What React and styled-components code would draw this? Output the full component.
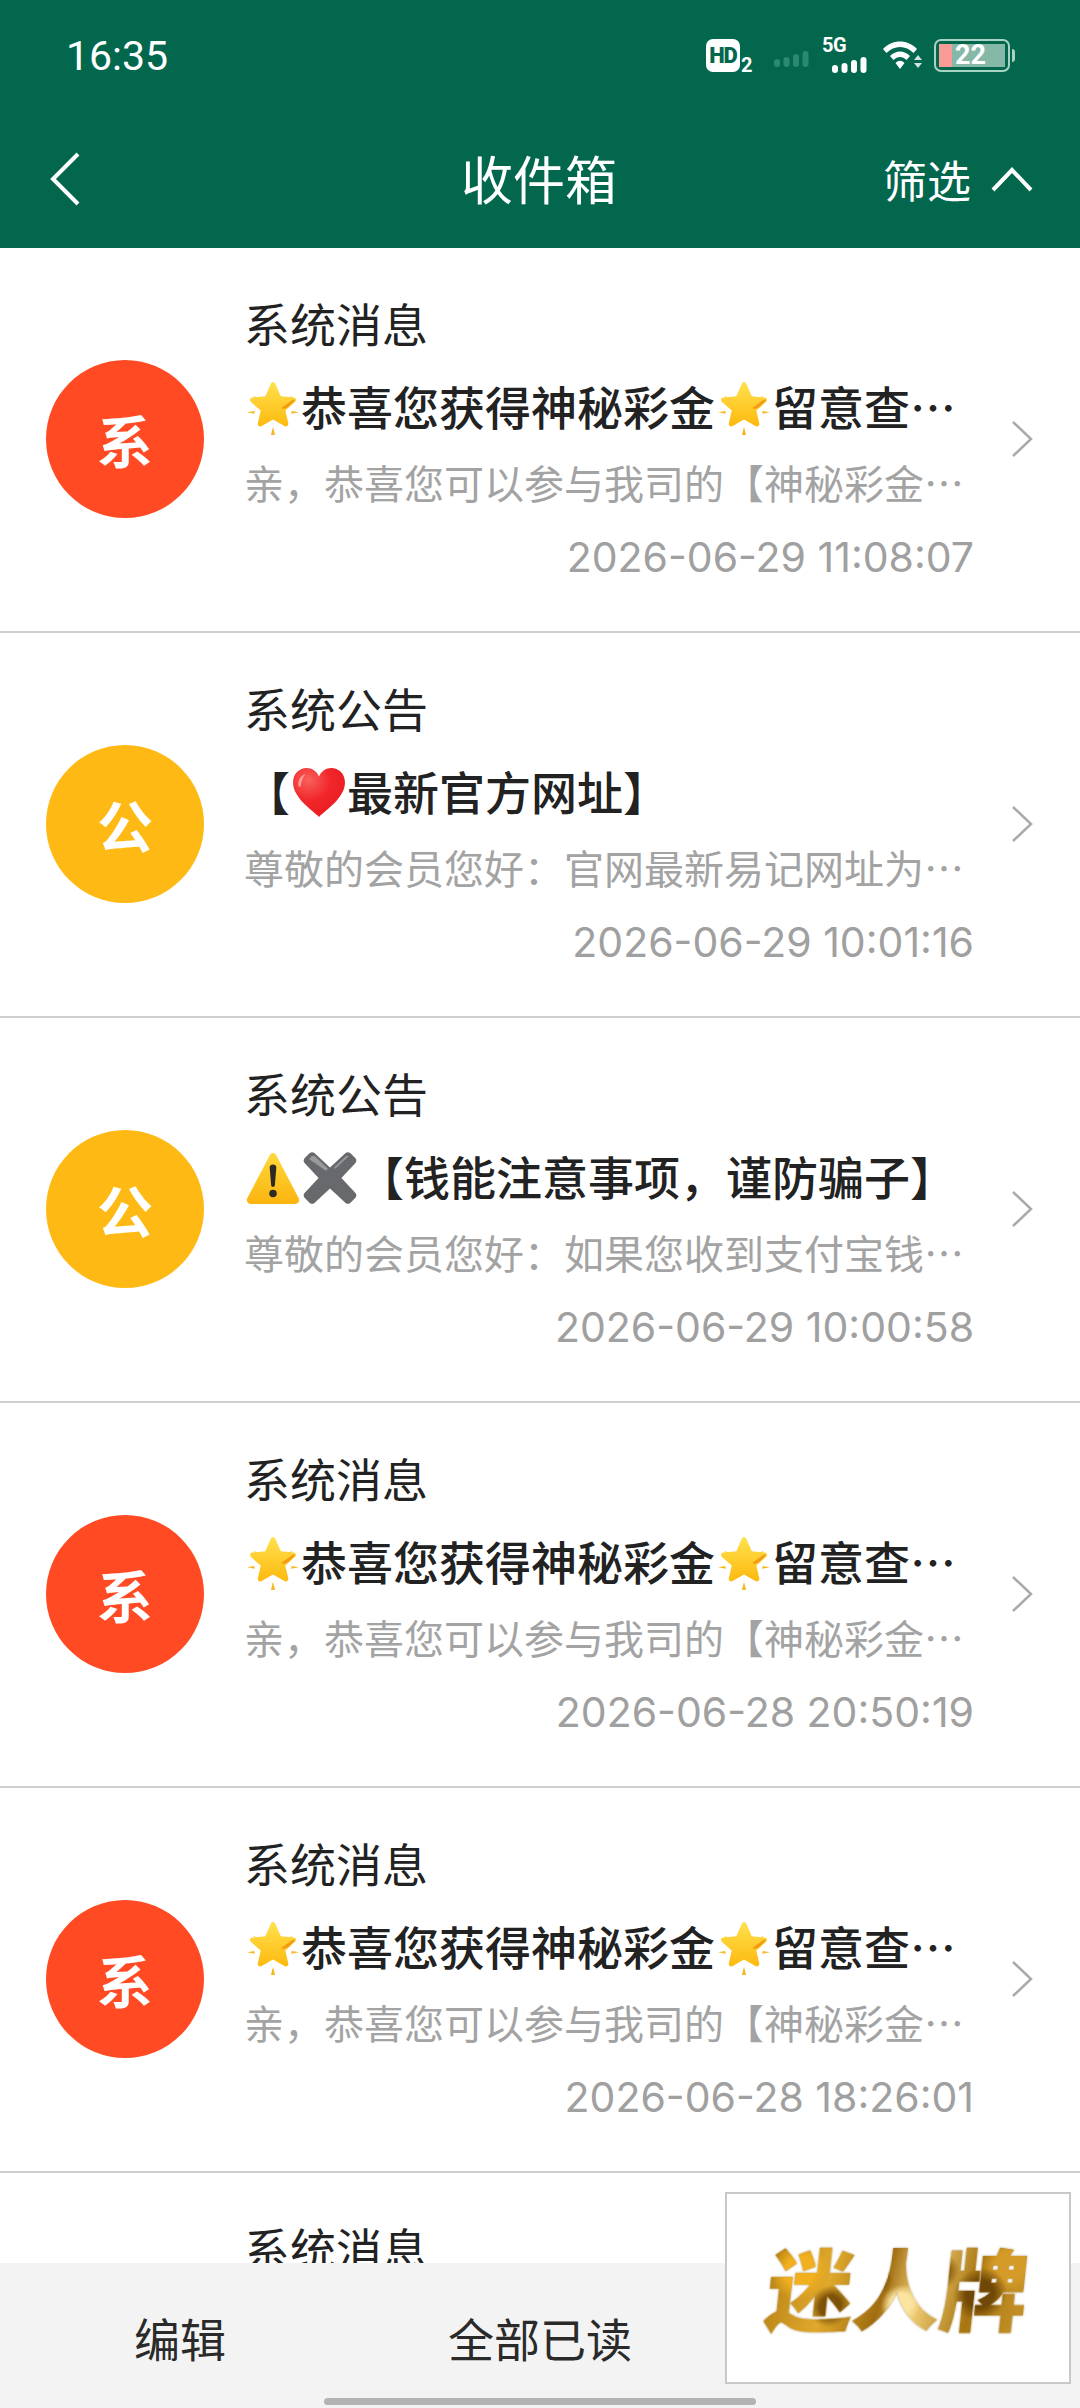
import styled, { createGlobalStyle } from 'styled-components';

const messages = [
  { id: 1, kind: 'sys', title: '系统消息', subject: 'star', preview: '亲，恭喜您可以参与我司的【神秘彩金】活动，请留意查收', time: '2026-06-29 11:08:07' },
  { id: 2, kind: 'pub', title: '系统公告', subject: 'site', preview: '尊敬的会员您好：官网最新易记网址为以下地址，请收藏', time: '2026-06-29 10:01:16' },
  { id: 3, kind: 'pub', title: '系统公告', subject: 'warn', preview: '尊敬的会员您好：如果您收到支付宝钱能相关的通知信息', time: '2026-06-29 10:00:58' },
  { id: 4, kind: 'sys', title: '系统消息', subject: 'star', preview: '亲，恭喜您可以参与我司的【神秘彩金】活动，请留意查收', time: '2026-06-28 20:50:19' },
  { id: 5, kind: 'sys', title: '系统消息', subject: 'star', preview: '亲，恭喜您可以参与我司的【神秘彩金】活动，请留意查收', time: '2026-06-28 18:26:01' },
  { id: 6, kind: 'sys', title: '系统消息', subject: 'star', preview: '亲，恭喜您可以参与我司的【神秘彩金】活动，请留意查收', time: '2026-06-28 16:12:44' },
];

const GlobalStyle = createGlobalStyle`
  html, body {
    margin: 0;
    padding: 0;
    background: #fff;
  }
  body {
    font-family: "Noto Sans CJK SC", "Noto Sans", sans-serif;
  }
`;

const Page = styled.div`
  position: relative;
  width: 1080px;
  height: 2408px;
  display: flex;
  flex-direction: column;
  overflow: hidden;
  background: #fff;
`;

const Header = styled.header`
  flex: none;
  height: 248px;
  background: #02674d;
  color: #fff;
  display: flex;
  flex-direction: column;
`;

const StatusBar = styled.div`
  height: 110px;
  box-sizing: border-box;
  padding: 2px 66px 0 66px;
  display: flex;
  align-items: center;
  justify-content: space-between;
`;

const Clock = styled.span`
  font-family: Roboto, sans-serif;
  font-size: 41px;
`;

const StatusIcons = styled.div`
  display: flex;
  align-items: center;
  height: 36px;
  margin-top: -2px;
`;

const HdBox = styled.div`
  width: 34px;
  height: 33px;
  border-radius: 7px;
  background: #fff;
  color: #02674d;
  font: 900 22px/33px Roboto, sans-serif;
  text-align: center;
  letter-spacing: -1px;
`;

const HdSub = styled.span`
  align-self: flex-end;
  width: 12px;
  font: 700 20px/18px Roboto, sans-serif;
  margin-left: 1px;
  margin-bottom: -1px;
`;

const BarsSlot = styled.div`
  flex: none;
  width: 35px;
  margin: 8px 0 0 21px;
`;

const NetBlock = styled.div`
  position: relative;
  width: 45px;
  height: 36px;
  margin-left: 13px;
  display: flex;
  align-items: flex-end;
  justify-content: flex-end;
`;

const NetLabel = styled.span`
  position: absolute;
  left: 0;
  top: -2px;
  font: 700 20px/20px Roboto, sans-serif;
  letter-spacing: -0.5px;
`;

const Wifi = styled.svg`
  display: block;
  width: 40px;
  height: 30px;
  margin-left: 15px;
`;

const Battery = styled.div`
  position: relative;
  width: 76px;
  height: 33px;
  margin-left: 12px;
  margin-right: 4px;
  box-sizing: border-box;
  border: 2px solid #a7d2c4;
  border-radius: 7px;
  padding: 3px;
  &::after {
    content: '';
    position: absolute;
    right: -7px;
    top: 8px;
    width: 3px;
    height: 13px;
    border-radius: 0 3px 3px 0;
    background: #a7d2c4;
  }
`;

const BatteryFill = styled.div`
  height: 100%;
  display: flex;
  background: #86b8a8;
  color: #fff;
  font: 700 27px/23px Roboto, sans-serif;
`;

const BatteryLevel = styled.div`
  width: 13px;
  height: 100%;
  background: #fb9b97;
  margin-right: 3px;
`;

const NavBar = styled.nav`
  position: relative;
  flex: 1;
  display: flex;
  align-items: center;
  justify-content: center;
  padding-bottom: 2px;
`;

const NavTitle = styled.h1`
  margin: 0 2px 0 0;
  font-size: 52px;
  font-weight: 400;
  line-height: 1;
`;

const BackIcon = styled.svg`
  position: absolute;
  left: 48px;
  top: 41px;
  width: 34px;
  height: 56px;
`;

const FilterButton = styled.div`
  position: absolute;
  right: 47px;
  top: 0;
  height: 100%;
  display: flex;
  align-items: center;
  gap: 20px;
  font-size: 44px;
`;

const CaretIcon = styled.svg`
  display: block;
  width: 42px;
  height: 26px;
`;

const List = styled.main`
  flex: 1;
  min-height: 0;
  overflow: hidden;
`;

const Row = styled.article`
  box-sizing: border-box;
  height: 385px;
  padding-left: 46px;
  display: flex;
  align-items: center;
  border-bottom: 2px solid #cfcfcf;
`;

const Avatar = styled.div`
  flex: none;
  width: 158px;
  height: 158px;
  margin-top: -2px;
  border-radius: 50%;
  background: ${props => (props.kind === 'pub' ? '#ffb914' : '#ff4a24')};
  color: #fff;
  display: flex;
  align-items: center;
  justify-content: center;
  font-size: 56px;
  font-weight: 700;
`;

const Content = styled.div`
  align-self: flex-start;
  box-sizing: border-box;
  width: 730px;
  margin-left: 40px;
  padding-top: 33px;
`;

const Title = styled.div`
  height: 84px;
  line-height: 82px;
  font-size: 46px;
  color: #222;
`;

const Subject = styled.div`
  height: 84px;
  line-height: 80px;
  width: 714px;
  font-size: 46px;
  font-weight: 500;
  color: #222;
  white-space: nowrap;
  overflow: hidden;
  text-overflow: ellipsis;
`;

const Emoji = styled.svg`
  display: inline-block;
  width: 54px;
  height: 54px;
  margin: 0 1.5px;
  vertical-align: -10px;
`;

const Preview = styled.div`
  height: 70px;
  line-height: 66px;
  width: 724px;
  font-size: 40px;
  color: #a3a3a3;
  white-space: nowrap;
  overflow: hidden;
  text-overflow: ellipsis;
`;

const Time = styled.div`
  height: 74px;
  line-height: 76px;
  text-align: right;
  font-family: Inter, Roboto, sans-serif;
  font-size: 41px;
  color: #a0a0a0;
`;

const Chevron = styled.svg`
  flex: none;
  width: 24px;
  height: 38px;
  margin-left: 36px;
  margin-top: -2px;
`;

const BottomBar = styled.footer`
  flex: none;
  height: 145px;
  box-sizing: border-box;
  padding-top: 2px;
  background: #f3f3f3;
  display: grid;
  grid-template-columns: repeat(3, 360px);
  align-items: center;
  justify-items: center;
  font-size: 46px;
  color: #2a2a2a;
`;

const HomeIndicator = styled.div`
  position: absolute;
  left: 324px;
  bottom: 3px;
  width: 432px;
  height: 7px;
  border-radius: 4px;
  background: #b3b3b3;
`;

const LogoCard = styled.div`
  position: absolute;
  left: 725px;
  top: 2192px;
  width: 346px;
  height: 192px;
  box-sizing: border-box;
  border: 2px solid #c8c8c8;
  background: #fff;
  display: flex;
  align-items: center;
  justify-content: center;
`;

const LogoText = styled.span`
  display: block;
  margin-top: -4px;
  font-size: 88px;
  font-weight: 900;
  line-height: 100px;
  letter-spacing: -1px;
  transform: skewX(-6deg);
  color: transparent;
  background:
    radial-gradient(circle at 12% 35%, #f2b01e 0 6%, transparent 12%),
    radial-gradient(circle at 25% 70%, #7d5208 0 5%, transparent 10%),
    radial-gradient(circle at 42% 45%, #8a5c0c 0 5%, transparent 10%),
    radial-gradient(circle at 52% 68%, #fbe3a0 0 7%, transparent 13%),
    radial-gradient(circle at 66% 36%, #8f6210 0 5%, transparent 10%),
    radial-gradient(circle at 82% 58%, #6f4706 0 6%, transparent 12%),
    radial-gradient(circle at 92% 30%, #d49b28 0 6%, transparent 12%),
    linear-gradient(100deg, #b57f14, #e0a92c 25%, #a06d10 45%, #f0cd74 58%, #a87510 78%, #c8942a);
  -webkit-background-clip: text;
  background-clip: text;
  filter: drop-shadow(0 0 1px rgba(120, 90, 30, 0.55));
`;

const barHeights = [8, 10, 13, 16];

const SignalBars = ({ color }) => (
  <svg viewBox="0 0 35 16" width="35" height="16" fill={color} style={{ display: 'block' }}>
    {barHeights.map((h, i) => (
      <rect key={h} x={i * 9.5} y={16 - h} width="6" height={h} rx="3" />
    ))}
  </svg>
);

const StarEmoji = () => (
  <Emoji viewBox="0 0 52 52">
    <defs>
      <linearGradient id="starFill" x1="0" y1="0" x2="0" y2="1">
        <stop offset="0" stopColor="#ffe14d" />
        <stop offset="1" stopColor="#fdb90f" />
      </linearGradient>
    </defs>
    <g fill="#f5b820">
      <path d="M26 44l2 8h-4zM7 14l7 4-1.500 2.200zM45 14l-7 4 1.500 2.200zM1 30l7-1 .5 2.500zM51 30l-7-1-.5 2.500z" />
    </g>
    <path
      d="M26 1c1.200 0 2 1 2.500 2.200l5 11.500 12.500 1.200c2.200.2 3 2.700 1.300 4.200l-9.400 8.300 2.800 12.300c.5 2.200-1.800 3.800-3.700 2.600L26 37l-10.900 6.400c-2 1.200-4.200-.5-3.700-2.600l2.800-12.300-9.400-8.300c-1.700-1.500-.9-4 1.300-4.200l12.500-1.200 5-11.500C24 2 24.800 1 26 1z"
      fill="url(#starFill)"
    />
    <path d="M34 26l11-8c1.500-.8 2.500 1 1 2l-6 5.500c-2 1.200-4.500 1.500-6 .5z" fill="#f39a12" />
  </Emoji>
);

const HeartEmoji = () => (
  <Emoji viewBox="0 0 52 50">
    <defs>
      <radialGradient id="heartFill" cx="0.3" cy="0.25" r="0.85">
        <stop offset="0" stopColor="#f9605c" />
        <stop offset="0.5" stopColor="#f0262a" />
        <stop offset="1" stopColor="#e81b20" />
      </radialGradient>
    </defs>
    <path
      d="M26 48C20 42 1 30 1 15 1 6 7.500 1 14 1c5.500 0 9.500 3 12 8 2.500-5 6.500-8 12-8 6.500 0 13 5 13 14 0 15-19 27-25 33z"
      fill="url(#heartFill)"
    />
    <path d="M6 17c0-5 3-9 7-10-2.500 3-4 6-4.500 11-.2 2-2.500 1-2.500-1z" fill="#ff9c96" />
  </Emoji>
);

const WarnEmoji = () => (
  <Emoji viewBox="0 0 52 52">
    <defs>
      <linearGradient id="warnFill" x1="0" y1="0" x2="0" y2="1">
        <stop offset="0" stopColor="#ffd83b" />
        <stop offset="1" stopColor="#fbb40f" />
      </linearGradient>
    </defs>
    <path d="M26 2c1.500 0 2.500 1 3.300 2.500l21.500 41c1.200 2.500-.3 5.500-3.300 5.500H4.500c-3 0-4.500-3-3.300-5.500l21.500-41C23.500 3 24.500 2 26 2z" fill="url(#warnFill)" />
    <path d="M22.800 16c0-1.800 1.400-3 3.200-3s3.200 1.200 3.200 3l-1.400 17c-.1 1-.8 1.600-1.800 1.600s-1.700-.6-1.800-1.600z" fill="#2d2a24" />
    <circle cx="26" cy="41" r="3.600" fill="#2d2a24" />
  </Emoji>
);

const CrossEmoji = () => (
  <Emoji viewBox="0 0 52 52">
    <path d="M11 2L26 16 41 2c1.500-1.200 3-1.200 4.500 0l5 5c1.200 1.500 1.200 3 0 4.500L37 26l13.500 14.500c1.200 1.500 1.200 3 0 4.500l-5 5c-1.500 1.200-3 1.200-4.500 0L26 36 11 50c-1.500 1.200-3 1.200-4.500 0l-5-5c-1.200-1.500-1.200-3 0-4.500L15 26 1.500 11.500C.3 10 .3 8.500 1.500 7l5-5C8 .8 9.500.8 11 2z" fill="#68696d" />
    <path d="M8 5c1.500-1 3-.5 4 .5L24 17l-2 2L6 8zM44 5c-1-.8-2-.7-3 .2L30 16l1 1z" fill="#9a9a9e" />
  </Emoji>
);

const renderSubject = subject => {
  if (subject === 'site') {
    return <>【<HeartEmoji />最新官方网址】</>;
  }
  if (subject === 'warn') {
    return <><WarnEmoji /><CrossEmoji />【钱能注意事项，谨防骗子】</>;
  }
  return <><StarEmoji />恭喜您获得神秘彩金<StarEmoji />留意查收您的账户</>;
};

const App = () => (
  <Page>
    <GlobalStyle />
    <Header>
      <StatusBar>
        <Clock>16:35</Clock>
        <StatusIcons>
          <HdBox>HD</HdBox>
          <HdSub>2</HdSub>
          <BarsSlot><SignalBars color="#2a8a70" /></BarsSlot>
          <NetBlock>
            <NetLabel>5G</NetLabel>
            <SignalBars color="#fff" />
          </NetBlock>
          <Wifi viewBox="0 0 40 30">
            <path d="M1 9C10-1 26-1 35 9l-3.500 4C24 5 12 5 4.500 13z" fill="#fff" />
            <path d="M8 16c6-6 14-6 20 0l-3.500 4c-4-4-9-4-13 0z" fill="#fff" />
            <path d="M13.500 23c3-3 6-3 9 0L18 29z" fill="#fff" />
            <path d="M36 15l4 5h-8zM32 23h8l-4 5z" fill="#cfe5dd" />
          </Wifi>
          <Battery>
            <BatteryFill>
              <BatteryLevel />
              22
            </BatteryFill>
          </Battery>
        </StatusIcons>
      </StatusBar>
      <NavBar>
        <BackIcon viewBox="0 0 34 56">
          <path d="M30 3L5 28l25 25" fill="none" stroke="#fff" strokeWidth="4" />
        </BackIcon>
        <NavTitle>收件箱</NavTitle>
        <FilterButton>
          筛选
          <CaretIcon viewBox="0 0 42 26">
            <path d="M2 24L21 4l19 20" fill="none" stroke="#fff" strokeWidth="4" />
          </CaretIcon>
        </FilterButton>
      </NavBar>
    </Header>
    <List>
      {messages.map(msg => (
        <Row key={msg.id}>
          <Avatar kind={msg.kind}>{msg.kind === 'pub' ? '公' : '系'}</Avatar>
          <Content>
            <Title>{msg.title}</Title>
            <Subject>{renderSubject(msg.subject)}</Subject>
            <Preview>{msg.preview}</Preview>
            <Time>{msg.time}</Time>
          </Content>
          <Chevron viewBox="0 0 24 38">
            <path d="M3 2l18 17L3 36" fill="none" stroke="#aaa" strokeWidth="2.500" />
          </Chevron>
        </Row>
      ))}
    </List>
    <BottomBar>
      <span>编辑</span>
      <span>全部已读</span>
    </BottomBar>
    <HomeIndicator />
    <LogoCard>
      <LogoText>迷人牌</LogoText>
    </LogoCard>
  </Page>
);

export default App;
